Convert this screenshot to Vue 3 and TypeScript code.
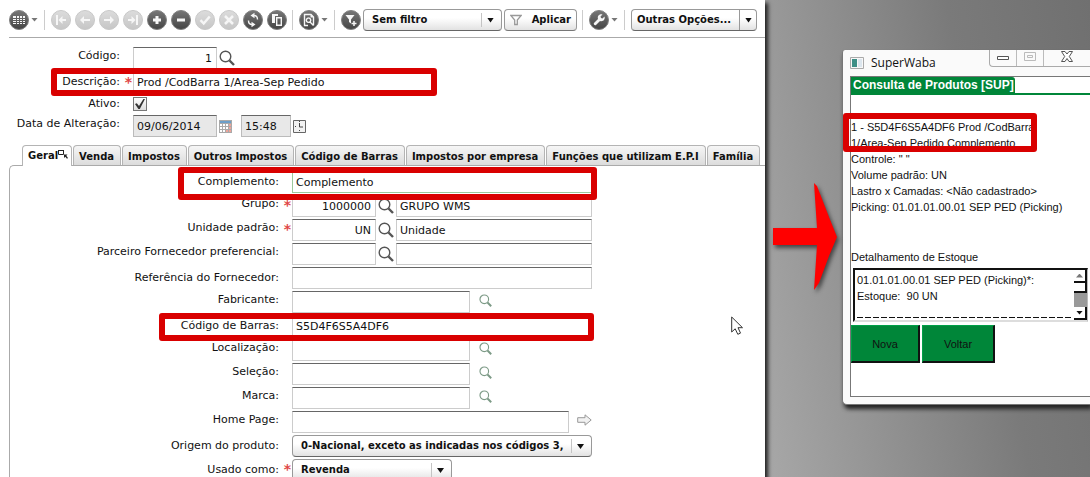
<script setup lang="ts">
import { ref } from 'vue'

interface Glyph {
  line?: string
  fill?: string
}

interface Tool {
  icon: string
  label: string
  off?: boolean
}

type Kind = 'text' | 'lookup' | 'search' | 'link' | 'select'

interface Field {
  id: string
  label: string
  kind: Kind
  required?: boolean
  value?: string
  detail?: string
  mark?: 'complement' | 'barcode'
  middle?: boolean
  size?: 'short'
}

const glyphs: Record<string, Glyph> = {
  grid: { fill: 'M4 6h3v2H4zM8 6h2v2H8zM11 6h2v2h-2zM14 6h2v2h-2zM4 9h3v1H4zM8 9h2v1H8zM11 9h2v1h-2zM14 9h2v1h-2zM4 11h3v1H4zM8 11h2v1H8zM11 11h2v1h-2zM14 11h2v1h-2zM4 13h3v1H4zM8 13h2v1H8zM11 13h2v1h-2zM14 13h2v1h-2z' },
  first: { fill: 'M5 5h2v10H5zM7.500 10l4-4v3H15v2h-3.500v3z' },
  prev: { fill: 'M5 10l4-4v3h6v2H9v3z' },
  next: { fill: 'M15 10l-4-4v3H5v2h6v3z' },
  last: { fill: 'M13 5h2v10h-2zM12.500 10l-4-4v3H5v2h3.500v3z' },
  plus: { fill: 'M8.500 6h3v2.500H14v3h-2.500V14h-3v-2.500H6v-3h2.500z' },
  minus: { fill: 'M6 8.500h8v3H6z' },
  check: { line: 'M5.500 10.200l3.200 3.300 6-7' },
  cross: { line: 'M6 6l8 8M14 6l-8 8' },
  refresh: { line: 'M11 5.500c2 0 3.500 1.500 3.500 4M9 14.500c-2 0-3.500-1.500-3.500-4', fill: 'M11.500 2.800v5.400L7.500 5.500zM8.500 11.800v5.400l4-2.700z' },
  copy: { line: 'M9.700 7.700h4.600v7.600H9.700z', fill: 'M5 4h6v2H8v7H5z' },
  preview: { line: 'M9 15.500H5.500v-11H12l2.500 2.500v8.500M9.500 8a2.200 2.200 0 1 0 .1 0M11 12l3.500 3.500', fill: 'M11.500 4v3.500H15z' },
  addfilter: { line: 'M10.500 13.500h5M13 11v5', fill: 'M4.500 5h9l-3.500 4.500v4l-2-1.500V9.500z' },
  wrench: { fill: 'M9 9c-1-3 1.500-5.500 4.500-4.500L11.500 6.500l.5 1.500 1.500.5 2-2c1 3-1.500 5.500-4.500 4.500L7 15c-1 1-3-.8-2-2z' },
}

const groups: { tools: Tool[]; menu: boolean }[] = [
  { tools: [{ icon: 'grid', label: 'Modo grade' }], menu: true },
  {
    tools: [
      { icon: 'first', label: 'Primeiro', off: true },
      { icon: 'prev', label: 'Anterior', off: true },
      { icon: 'next', label: 'Próximo', off: true },
      { icon: 'last', label: 'Último', off: true },
      { icon: 'plus', label: 'Adicionar' },
      { icon: 'minus', label: 'Remover' },
      { icon: 'check', label: 'Salvar', off: true },
      { icon: 'cross', label: 'Cancelar', off: true },
      { icon: 'refresh', label: 'Atualizar' },
      { icon: 'copy', label: 'Duplicar' },
    ],
    menu: false,
  },
  { tools: [{ icon: 'preview', label: 'Visualizar' }], menu: true },
]

const tabs = ['Geral', 'Venda', 'Impostos', 'Outros Impostos', 'Código de Barras', 'Impostos por empresa', 'Funções que utilizam E.P.I', 'Família']
const activeTab = ref('Geral')

const fields = ref<Field[]>([
  { id: 'complemento', label: 'Complemento:', kind: 'text', value: 'Complemento', mark: 'complement', middle: true },
  { id: 'grupo', label: 'Grupo:', kind: 'lookup', required: true, value: '1000000', detail: 'GRUPO WMS' },
  { id: 'unidade', label: 'Unidade padrão:', kind: 'lookup', required: true, value: 'UN', detail: 'Unidade' },
  { id: 'parceiro', label: 'Parceiro Fornecedor preferencial:', kind: 'lookup', value: '', detail: '' },
  { id: 'referencia', label: 'Referência do Fornecedor:', kind: 'text', value: '', middle: true },
  { id: 'fabricante', label: 'Fabricante:', kind: 'search', value: '' },
  { id: 'barras', label: 'Código de Barras:', kind: 'text', value: 'S5D4F6S5A4DF6', mark: 'barcode', middle: true },
  { id: 'localizacao', label: 'Localização:', kind: 'search', value: '' },
  { id: 'selecao', label: 'Seleção:', kind: 'search', value: '' },
  { id: 'marca', label: 'Marca:', kind: 'search', value: '' },
  { id: 'homepage', label: 'Home Page:', kind: 'link', value: '' },
  { id: 'origem', label: 'Origem do produto:', kind: 'select', value: '0-Nacional, exceto as indicadas nos códigos 3,', middle: true },
  { id: 'usado', label: 'Usado como:', kind: 'select', required: true, value: 'Revenda', middle: true, size: 'short' },
])

const codigo = ref('1')
const descricao = ref('Prod /CodBarra 1/Area-Sep Pedido')
const ativo = ref(true)
const data = ref('09/06/2014')
const hora = ref('15:48')
</script>

<template>
  <div class="page">
    <svg class="defs" width="0" height="0" aria-hidden="true">
      <defs>
        <linearGradient id="dark" x1="0" y1="0" x2="0" y2="1">
          <stop offset="0" stop-color="#777" />
          <stop offset="1" stop-color="#444" />
        </linearGradient>
        <linearGradient id="light" x1="0" y1="0" x2="0" y2="1">
          <stop offset="0" stop-color="#dcdcdc" />
          <stop offset="1" stop-color="#c6c6c6" />
        </linearGradient>
        <symbol id="lens" viewBox="0 0 16 16">
          <circle cx="6.500" cy="6.500" r="5.300" fill="none" stroke="currentColor" stroke-width="1.400" />
          <path d="M10.500 10.500l4.500 4.500" stroke="currentColor" stroke-width="2.400" />
        </symbol>
      </defs>
    </svg>

    <main class="editor">
      <div class="toolbar">
        <template v-for="(group, g) in groups" :key="g">
          <div class="group">
            <button v-for="tool in group.tools" :key="tool.icon" class="round" :aria-label="tool.label">
              <svg viewBox="0 0 20 20">
                <circle cx="10" cy="10" r="9.500" :fill="tool.off ? 'url(#light)' : 'url(#dark)'" :stroke="tool.off ? '#c8c8c8' : '#808080'" />
                <path v-if="glyphs[tool.icon].line" :d="glyphs[tool.icon].line" fill="none" stroke="#f6f6f6" :stroke-width="tool.off ? 2.500 : 1.400" />
                <path v-if="glyphs[tool.icon].fill" :d="glyphs[tool.icon].fill" fill="#f6f6f6" />
              </svg>
            </button>
            <i v-if="group.menu" class="caret"></i>
          </div>
          <i class="sep"></i>
        </template>
        <button class="round" aria-label="Novo filtro">
          <svg viewBox="0 0 20 20">
            <circle cx="10" cy="10" r="9.500" fill="url(#dark)" stroke="#808080" />
            <path :d="glyphs.addfilter.line" stroke="#f6f6f6" stroke-width="1.500" />
            <path :d="glyphs.addfilter.fill" fill="#f6f6f6" />
          </svg>
        </button>
        <span class="select filter">
          <select aria-label="Filtro"><option>Sem filtro</option></select>
        </span>
        <button class="push apply">
          <svg viewBox="0 0 12 12" width="12" height="12"><path d="M.8 1.500h10.400L7.300 6v4.500H4.700V6z" fill="#fff" stroke="#999" stroke-width="1.300" /></svg>
          Aplicar
        </button>
        <i class="sep"></i>
        <div class="group">
          <button class="round" aria-label="Configurar">
            <svg viewBox="0 0 20 20">
              <circle cx="10" cy="10" r="9.500" fill="url(#dark)" stroke="#808080" />
              <path :d="glyphs.wrench.fill" fill="#f6f6f6" />
            </svg>
          </button>
          <i class="caret"></i>
        </div>
        <i class="sep"></i>
        <span class="select options">
          <select aria-label="Outras opções"><option>Outras Opções...</option></select>
        </span>
      </div>

      <form class="head" @submit.prevent>
        <div class="row">
          <label for="codigo">Código:</label><span class="req"></span>
          <input id="codigo" v-model="codigo" class="code" />
          <button class="find" type="button" aria-label="Pesquisar código"><svg><use href="#lens" /></svg></button>
        </div>
        <div class="row">
          <label class="middle" for="descricao">Descrição:</label><span class="req">*</span>
          <input id="descricao" v-model="descricao" class="wide" />
          <i class="mark description"></i>
        </div>
        <div class="row tight">
          <label class="middle" for="ativo">Ativo:</label><span class="req"></span>
          <input id="ativo" v-model="ativo" type="checkbox" />
        </div>
        <div class="row">
          <label for="data">Data de Alteração:</label><span class="req"></span>
          <input id="data" v-model="data" class="date" readonly />
          <svg class="calendar" viewBox="0 0 13 13">
            <path d="M0 0h13v13H0z" fill="#a9a9a9" />
            <path d="M1 1h11v2H1z" fill="#6c9fc9" />
            <path d="M1 4h2v2H1zM4 4h2v2H4zM7 4h2v2H7zM1 7h2v2H1zM4 7h2v2H4zM7 7h2v2H7zM1 10h2v2H1zM4 10h2v2H4z" fill="#fff" />
            <path d="M10 4h2v2h-2zM10 7h2v2h-2zM7 10h2v2H7zM10 10h2v2h-2z" fill="#eea49a" />
          </svg>
          <input v-model="hora" class="time" aria-label="Hora" readonly />
          <svg class="clock" viewBox="0 0 13 13">
            <path d="M.5.5h12v12H.5z" fill="#f2f2f2" stroke="#666" />
            <path d="M6.500 3v4H10M2 6.500h1M6.500 10v1M6.500 1v1" fill="none" stroke="#444" />
          </svg>
        </div>
      </form>

      <div class="tabs" role="tablist">
        <button v-for="tab in tabs" :key="tab" role="tab" :aria-selected="tab === activeTab" :class="['tab', { active: tab === activeTab }]" @click="activeTab = tab">
          {{ tab }}
          <svg v-if="tab === 'Geral'" class="detach" viewBox="0 0 10 10"><path d="M.5 1.500h5v4h-5zM0 1.500h6" fill="none" stroke="#222" /><path d="M6 5.500h3.500l-1.200 1.200L10 9l-1 .8-1.700-2.100L6 9z" fill="#222" /></svg>
        </button>
      </div>

      <form class="panel" @submit.prevent>
        <div v-for="f in fields" :key="f.id" class="row">
          <label :for="f.id" :class="{ middle: f.middle }">{{ f.label }}</label>
          <span class="req">{{ f.required ? '*' : '' }}</span>
          <div class="control">
            <input v-if="f.kind === 'text'" :id="f.id" v-model="f.value" :class="['fill', { focused: f.mark === 'complement' }]" />
            <template v-else-if="f.kind === 'lookup'">
              <input :id="f.id" v-model="f.value" class="code" />
              <button class="find" type="button" aria-label="Pesquisar"><svg><use href="#lens" /></svg></button>
              <input v-model="f.detail" class="fill" :aria-label="f.label + ' descrição'" />
            </template>
            <template v-else-if="f.kind === 'search'">
              <input :id="f.id" v-model="f.value" class="medium" />
              <button class="find green" type="button" aria-label="Pesquisar"><svg><use href="#lens" /></svg></button>
            </template>
            <template v-else-if="f.kind === 'link'">
              <input :id="f.id" v-model="f.value" class="fill" />
              <button class="go" type="button" aria-label="Abrir página">
                <svg viewBox="0 0 15 12"><path d="M.7 3.700h7.300V.8L14.200 6 8 11.200V8.300H.7z" fill="#f1f1f1" stroke="#999" /></svg>
              </button>
            </template>
            <span v-else :class="['select', f.size || 'full']">
              <select :id="f.id" v-model="f.value"><option>{{ f.value }}</option></select>
            </span>
          </div>
          <i v-if="f.mark" :class="['mark', f.mark]"></i>
        </div>
      </form>

      <svg class="cursor" viewBox="0 0 12 19"><path d="M.7 1v15l3.500-3.200 2.600 5.500 2.700-1.200L7 11.700h4.500z" fill="#fff" stroke="#333" /></svg>
    </main>

    <aside class="stage">
      <svg class="arrow" viewBox="0 0 69 116">
        <path d="M0 45h44L41 0l3 3 12 31 8 20-8 19-10 27-5 7 3-45H0z" fill="#f00" />
      </svg>
      <section class="window">
        <header class="title">
          <svg class="app" viewBox="0 0 14 12">
            <path d="M.5.500h13v11H.5z" fill="#f8f8f8" stroke="#aaa" />
            <path d="M2 2h5v8H2z" fill="#3e8f86" /><path d="M8 2h4v8H8z" fill="#dce6ee" />
          </svg>
          <h1>SuperWaba</h1>
          <div class="buttons">
            <button aria-label="Minimizar"><svg viewBox="0 0 14 14"><path d="M1.500 6.500h11v3h-11z" fill="#fff" stroke="#555" /></svg></button>
            <button aria-label="Maximizar"><svg viewBox="0 0 14 14"><path d="M1.500 2.500h11v8h-11zM4.500 5.500h5v2h-5z" fill="none" stroke="#bbb" /></svg></button>
            <button class="close" aria-label="Fechar"><svg viewBox="0 0 14 14"><path d="M1.500 1.500h3.500l2 2.500 2-2.500h3.500L9.300 6.500l3.200 5H9L7 8.500l-2 3H1.500l3.200-5z" fill="#fff" stroke="#555" /></svg></button>
          </div>
        </header>
        <div class="client">
          <div class="heading"><h2>Consulta de Produtos [SUP]</h2></div>
          <div class="info">
            <div class="product">
              <p>1 - S5D4F6S5A4DF6 Prod /CodBarra</p>
              <p>1/Area-Sep Pedido Complemento</p>
              <i class="mark item"></i>
            </div>
            <p>Controle: " "</p>
            <p>Volume padrão: UN</p>
            <p>Lastro x Camadas: &lt;Não cadastrado&gt;</p>
            <p>Picking: 01.01.01.00.01 SEP PED (Picking)</p>
          </div>
          <h3>Detalhamento de Estoque</h3>
          <div class="stock">
            <div class="lines">
              <p>01.01.01.00.01 SEP PED (Picking)*:</p>
              <p>Estoque:&nbsp; 90 UN</p>
              <hr />
            </div>
            <div class="scroll">
              <button class="up" aria-label="Subir"></button>
              <i class="thumb"></i>
              <button class="down" aria-label="Descer"></button>
            </div>
          </div>
          <div class="actions">
            <button class="nova">Nova</button>
            <button class="voltar">Voltar</button>
          </div>
        </div>
      </section>
    </aside>
  </div>
</template>

<style>
body {
  overflow: hidden;
}
</style>

<style scoped>
.page {
  display: grid;
  grid-template-columns: minmax(0, 1fr) 325px;
  height: 100vh;
  overflow: hidden;
  font-family: "DejaVu Sans", Verdana, sans-serif;
  font-size: 11px;
  line-height: 14px;
  color: #111;
}
.page * {
  box-sizing: border-box;
}
.defs {
  position: absolute;
}
button,
input,
select {
  margin: 0;
  font: inherit;
  color: inherit;
}
button {
  padding: 0;
  border: 0;
  background: none;
}
h1,
h2,
h3,
p {
  margin: 0;
  font-size: inherit;
  font-weight: normal;
}
.editor {
  position: relative;
  z-index: 1;
  background: #fff;
  box-shadow: 2px 4px 4px 1px #222;
}

/* toolbar */
.toolbar {
  display: flex;
  align-items: center;
  height: 38px;
  margin-left: 9px;
  padding-top: 2px;
  border-bottom: 1px solid #aaa;
}
.group {
  display: flex;
  align-items: center;
  gap: 4px;
}
.round {
  flex: none;
  width: 20px;
  height: 20px;
}
.round svg {
  display: block;
  width: 20px;
  height: 20px;
}
.caret {
  width: 7px;
  height: 4px;
  margin-left: -2px;
  margin-right: 1px;
  background: #777;
  clip-path: polygon(0 0, 100% 0, 50% 100%);
}
.sep {
  width: 1px;
  height: 20px;
  margin: 0 6px 0 5px;
  background: #ccc;
}
.select {
  position: relative;
  display: block;
  height: 22px;
}
.select select {
  display: block;
  width: 100%;
  height: 100%;
  padding: 0 24px 0 8px;
  appearance: none;
  border: 1px solid #999;
  border-bottom-color: #666;
  border-radius: 4px;
  background: linear-gradient(#fff 40%, #e2e2e2);
  font-size: 10px;
  font-weight: bold;
  color: #111;
}
.select::before {
  content: "";
  position: absolute;
  top: 4px;
  right: 20px;
  bottom: 4px;
  border-left: 1px solid #c4c4c4;
}
.select::after {
  content: "";
  position: absolute;
  top: 9px;
  right: 8px;
  width: 7px;
  height: 5px;
  background: #111;
  clip-path: polygon(0 0, 100% 0, 50% 100%);
}
.filter {
  width: 139px;
  margin: 0 2px;
}
.options {
  width: 126px;
}
.options select {
  padding: 0 16px 0 5px;
}
.options::before {
  top: 1px;
  right: 17px;
  bottom: 1px;
  border-color: #999;
}
.options::after {
  right: 5px;
}
.push {
  display: flex;
  align-items: center;
  justify-content: space-between;
  height: 22px;
  border: 1px solid #999;
  border-bottom-color: #777;
  border-radius: 4px;
  background: linear-gradient(#fff 40%, #e2e2e2);
  font-size: 10px;
  font-weight: bold;
}
.apply {
  width: 73px;
  padding: 0 5px;
}

/* form rows */
.row {
  position: relative;
  display: flex;
  align-items: center;
  height: 22px;
  margin-bottom: 2px;
}
.row label {
  flex: none;
  padding-bottom: 4px;
  text-align: right;
}
.row label.middle {
  padding-bottom: 0;
}
.req {
  flex: none;
  width: 13px;
  padding-right: 1px;
  text-align: right;
  font-size: 14px;
  font-weight: bold;
  line-height: 14px;
  color: #e04848;
}
.row input {
  flex: none;
  height: 22px;
  padding: 0 3px;
  border: 1px solid #ccc;
  border-top-color: #666;
  border-radius: 0;
  background: #fff;
  outline: 0;
}
.row .code {
  width: 84px;
  padding-right: 4px;
  text-align: right;
}
.find {
  flex: none;
  width: 16px;
  height: 16px;
  margin: 0 2px;
  color: #555;
}
.find svg {
  display: block;
  width: 100%;
  height: 100%;
}
.find.green {
  width: 13px;
  height: 13px;
  margin: 0 0 4px 9px;
  color: #7c9a86;
}
.head {
  padding-top: 9px;
}
.head label {
  width: 120px;
}
.head .wide {
  width: 300px;
  border-color: transparent transparent transparent #ccc;
}
.head .tight {
  height: 18px;
}
.row input[type="checkbox"] {
  width: 14px;
  height: 14px;
  padding: 0;
  appearance: none;
  border: 1px solid #777;
  background: linear-gradient(#fff, #ddd);
}
.row input[type="checkbox"]:checked::after {
  content: "";
  display: block;
  width: 10px;
  height: 10px;
  margin: 1px;
  background: #333;
  clip-path: polygon(0 50%, 18% 42%, 40% 70%, 84% 0, 100% 0, 48% 100%, 34% 100%);
}
.head .date,
.head .time {
  background: #e8e8e8;
  border-color: #bbb;
  border-top-color: #666;
}
.head .date {
  width: 84px;
}
.head .time {
  width: 50px;
}
.calendar,
.clock {
  width: 13px;
  height: 13px;
  margin: 0 9px 0 2px;
}

/* red callouts */
.product {
  position: relative;
}
.mark {
  position: absolute;
  z-index: 1;
  border: 6px solid #d90000;
  border-radius: 3px;
  pointer-events: none;
}
.mark.description {
  top: -3px;
  left: 51px;
  width: 386px;
  height: 28px;
}
.mark.complement {
  top: -4px;
  left: 168px;
  width: 419px;
  height: 33px;
}
.mark.barcode {
  top: -2px;
  left: 149px;
  width: 435px;
  height: 28px;
}
.mark.item {
  top: -6px;
  left: -8px;
  width: 194px;
  height: 39px;
}

/* tabs */
.tabs {
  display: flex;
  gap: 1px;
  margin-top: 8px;
  padding-left: 22px;
}
.tab {
  height: 20px;
  padding: 2px 6px 0 5px;
  border: 1px solid #b4b4b4;
  border-bottom: 0;
  border-radius: 4px 4px 0 0;
  background: linear-gradient(#f6f6f6, #dcdcdc);
  font-size: 10px;
  font-weight: bold;
  white-space: nowrap;
}
.tab.active {
  z-index: 1;
  display: flex;
  height: 21px;
  margin-bottom: -1px;
  padding: 3px 3px 0 5px;
  background: #fff;
}
.detach {
  width: 10px;
  height: 10px;
}
.panel {
  margin-left: 9px;
  padding-top: 5px;
  border: 1px solid #aaa;
  border-width: 1px 0 0 1px;
  border-radius: 5px 0 0 0;
}
.panel label {
  width: 269px;
}
.panel .req {
  padding-bottom: 2px;
}
.control {
  display: flex;
  align-items: center;
  width: 300px;
}
.row .fill {
  flex: 1;
  width: 0;
}
.row .medium {
  width: 178px;
}
.row .focused {
  border-color: #9cc89c;
}
.go {
  width: 15px;
  height: 12px;
  margin: 0 0 5px 8px;
}
.go svg {
  display: block;
}
.full {
  width: 300px;
}
.short {
  width: 160px;
}
.cursor {
  position: absolute;
  top: 316px;
  left: 731px;
  width: 12px;
  height: 19px;
}

/* handheld window */
.stage {
  display: flex;
  align-items: flex-start;
  overflow: hidden;
  background: linear-gradient(80deg, #a8a8a8, #7a7a7a 65%, #707070);
  font-family: "Liberation Sans", Arial, sans-serif;
  font-size: 11px;
  line-height: 16px;
}
.arrow {
  flex: none;
  width: 69px;
  height: 116px;
  margin: 183px 0 0 8px;
  filter: drop-shadow(2px 3px 2px #444);
}
.window {
  flex: 1;
  min-width: 0;
  height: 355px;
  margin-top: 50px;
  padding: 0 0 7px 7px;
  border: 1px solid #777;
  border-width: 0 0 1px 1px;
  border-radius: 3px 0 0 5px;
  background: #fafafa;
  box-shadow: 2px 4px 4px #222;
}
.title {
  display: flex;
  align-items: center;
  height: 26px;
  font-family: "Open Sans", "Noto Sans", sans-serif;
}
.app {
  width: 14px;
  height: 12px;
  margin-right: 7px;
}
.title h1 {
  flex: 1;
  font-size: 12px;
}
.buttons {
  display: flex;
  align-self: flex-start;
  height: 17px;
  border: 1px solid #aaa;
  border-width: 0 0 1px 1px;
  border-radius: 0 0 0 4px;
}
.buttons button {
  width: 27px;
  border-right: 1px solid #bbb;
}
.buttons .close {
  width: 46px;
  border: 0;
}
.buttons svg {
  width: 14px;
  height: 14px;
}
.client {
  height: 321px;
  border: 1px solid #777;
  border-right: 0;
  background: #fff;
}
.heading {
  display: flex;
  border-bottom: 2px solid #008639;
}
.heading h2 {
  padding: 1px 1px 0 2px;
  border-radius: 0 3px 0 0;
  background: #008639;
  color: #fff;
  font-size: 12px;
  font-weight: bold;
  line-height: 15px;
}
.info {
  padding-top: 24px;
}
.info,
.client h3,
.stock {
  white-space: nowrap;
}
.client h3 {
  margin: 34px 0 3px;
}
.stock {
  display: flex;
  justify-content: space-between;
  height: 54px;
  margin: 0 2px;
  border: 2px solid #111;
  border-right: 1px solid #bbb;
  border-bottom-color: #ddd;
}
.lines {
  flex: 1;
  padding: 2px 2px 0;
}
.lines hr {
  height: 1px;
  margin: 13px 0 0;
  border: 0;
  background: repeating-linear-gradient(90deg, #111 0 6px, #fff 6px 8px);
}
.scroll {
  display: flex;
  flex-direction: column;
  width: 13px;
  background: #999;
}
.scroll button,
.thumb {
  height: 13px;
  border: 1px solid #111;
  border-width: 0 2px 2px 0;
  background: #fff;
}
.thumb {
  flex: none;
  height: 10px;
}
.scroll button {
  flex: none;
  display: grid;
  place-items: center;
}
.scroll button::after {
  content: "";
  width: 7px;
  height: 4px;
  background: #777;
  clip-path: polygon(50% 0, 100% 100%, 0 100%);
}
.scroll .down {
  margin-top: auto;
}
.scroll .down::after {
  background: #111;
  clip-path: polygon(0 0, 100% 0, 50% 100%);
}
.actions {
  display: flex;
  gap: 2px;
  margin-top: 3px;
}
.actions button {
  height: 38px;
  border: 1px solid #00a048;
  border-right: 2px solid #111;
  border-bottom: 2px solid #111;
  background: #008639;
  color: #111;
}
.actions .nova {
  width: 69px;
}
.actions .voltar {
  width: 73px;
}
</style>
